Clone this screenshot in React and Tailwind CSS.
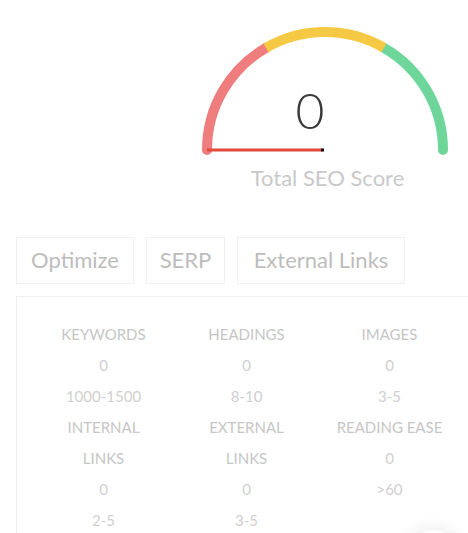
import React from 'react'

const font = { fontFamily: 'Lato, "Noto Sans", sans-serif' }

function Gauge() {
    return (
        <div className="relative ml-[200px] mt-5 w-[250px]">
            <svg width="250" height="135" viewBox="0 0 250 135">
                <path d="M 7 130 A 118 118 0 0 1 66 27.81" fill="none" stroke="#ef7d7d" strokeWidth="10" strokeLinecap="round" />
                <path d="M 184 27.81 A 118 118 0 0 1 243 130" fill="none" stroke="#6fd69b" strokeWidth="10" strokeLinecap="round" />
                <path d="M 66 27.81 A 118 118 0 0 1 184 27.81" fill="none" stroke="#f6c944" strokeWidth="10" strokeLinecap="butt" />
                <line x1="7" y1="130" x2="122" y2="130" stroke="#e0493b" strokeWidth="3" />
                <rect x="121" y="128.5" width="3" height="3" fill="#111" />
            </svg>
            <div className="absolute left-[60px] top-[65px] w-[100px] text-center text-[50px] leading-none font-light text-[#3a3a3a]">
                0
            </div>
            <div className="mt-[9px] ml-[5px] text-center text-[22px] leading-7 text-[#c9c9c9]">
                Total SEO Score
            </div>
        </div>
    )
}

const tabs = [
    { label: 'Optimize', w: 'w-[118px]' },
    { label: 'SERP', w: 'w-[79px]' },
    { label: 'External Links', w: 'w-[168px]' },
]

const stats = [
    { label: ['KEYWORDS'], value: '0', range: '1000-1500' },
    { label: ['HEADINGS'], value: '0', range: '8-10' },
    { label: ['IMAGES'], value: '0', range: '3-5' },
    { label: ['INTERNAL', 'LINKS'], value: '0', range: '2-5' },
    { label: ['EXTERNAL', 'LINKS'], value: '0', range: '3-5' },
    { label: ['READING EASE'], value: '0', range: '>60' },
]

export default function App() {
    return (
        <div className="relative h-[533px] w-[468px] overflow-hidden bg-white" style={font}>
            <Gauge />

            {/* tabs */}
            <div className="ml-4 mt-[45px] flex gap-3">
                {tabs.map(t => (
                    <div
                        key={t.label}
                        className={`${t.w} flex h-[47px] items-center justify-center border border-[#f0f0f0] pb-[3px] text-[22px] text-[#bdbdbd]`}
                    >
                        {t.label}
                    </div>
                ))}
            </div>

            {/* stats panel */}
            <div className="ml-4 mt-3 w-[470px] border border-[#f0f0f0] pl-[15px] pt-[22px]">
                <div className="grid w-[429px] grid-cols-3">
                    {stats.map((s, i) => (
                        <div key={i} className="flex flex-col items-center text-[15px] leading-[31px] text-[#c6c6c6]">
                            {s.label.map(l => (
                                <span key={l}>{l}</span>
                            ))}
                            <span className="text-[#d0d0d0]">{s.value}</span>
                            <span className="text-[#d0d0d0]">{s.range}</span>
                        </div>
                    ))}
                </div>
            </div>

            {/* floating button shadow */}
            <div className="absolute left-[405px] top-[530px] h-14 w-14 rounded-full bg-white shadow-[0_0_18px_rgba(0,0,0,0.1)]" />
        </div>
    )
}
